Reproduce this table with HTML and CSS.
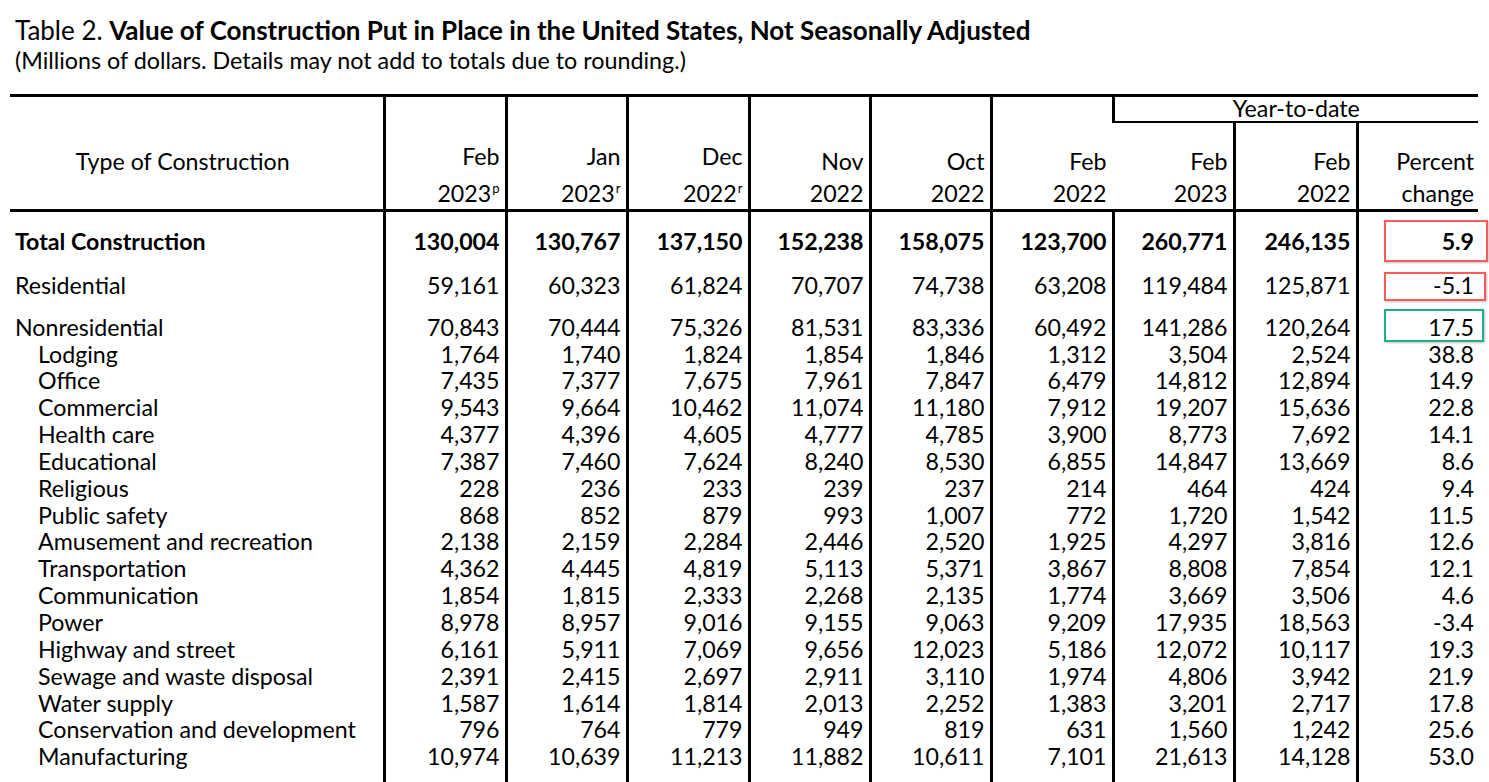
FILE: index.html
```html
<!DOCTYPE html>
<html>
<head>
<meta charset="utf-8">
<link rel="stylesheet" href="styles.css">
</head>
<body>
<div class="page">
  <h1 class="title">Table 2. <b>Value of Construction Put in Place in the United States, Not Seasonally Adjusted</b></h1>
  <p class="subtitle">(Millions of dollars. Details may not add to totals due to rounding.)</p>
  <table class="data">
    <colgroup>
      <col class="c-label">
      <col class="c1"><col class="c2"><col class="c3"><col class="c4"><col class="c5"><col class="c6"><col class="c7"><col class="c8"><col class="c9">
    </colgroup>
    <thead>
      <tr class="h1">
        <th rowspan="2" class="h-label">Type of Construction</th>
        <th rowspan="2" class="h-num"><div class="m up">Feb</div><div class="y">2023<sup>p</sup></div></th>
        <th rowspan="2" class="h-num"><div class="m up">Jan</div><div class="y">2023<sup>r</sup></div></th>
        <th rowspan="2" class="h-num"><div class="m up">Dec</div><div class="y">2022<sup>r</sup></div></th>
        <th rowspan="2" class="h-num"><div class="m">Nov</div><div class="y">2022</div></th>
        <th rowspan="2" class="h-num"><div class="m">Oct</div><div class="y">2022</div></th>
        <th rowspan="2" class="h-num"><div class="m">Feb</div><div class="y">2022</div></th>
        <th colspan="3" class="h-ytd">Year-to-date</th>
      </tr>
      <tr class="h2">
        <th class="h-num"><div class="m">Feb</div><div class="y">2023</div></th>
        <th class="h-num"><div class="m">Feb</div><div class="y">2022</div></th>
        <th class="h-num h-pct"><div class="m">Percent</div><div class="y">change</div></th>
      </tr>
    </thead>
    <tbody>
      <tr class="r-total">
        <td class="lbl">Total Construction</td>
        <td>130,004</td><td>130,767</td><td>137,150</td><td>152,238</td><td>158,075</td><td>123,700</td><td>260,771</td><td>246,135</td>
        <td class="pct"><span class="mark mark-total"></span>5.9</td>
      </tr>
      <tr class="r-res">
        <td class="lbl">Residential</td>
        <td>59,161</td><td>60,323</td><td>61,824</td><td>70,707</td><td>74,738</td><td>63,208</td><td>119,484</td><td>125,871</td>
        <td class="pct"><span class="mark mark-res"></span>-5.1</td>
      </tr>
      <tr class="r-non">
        <td class="lbl">Nonresidential</td>
        <td>70,843</td><td>70,444</td><td>75,326</td><td>81,531</td><td>83,336</td><td>60,492</td><td>141,286</td><td>120,264</td>
        <td class="pct"><span class="mark mark-non"></span>17.5</td>
      </tr>
      <tr><td class="lbl sub">Lodging</td><td>1,764</td><td>1,740</td><td>1,824</td><td>1,854</td><td>1,846</td><td>1,312</td><td>3,504</td><td>2,524</td><td class="pct">38.8</td></tr>
      <tr><td class="lbl sub">Office</td><td>7,435</td><td>7,377</td><td>7,675</td><td>7,961</td><td>7,847</td><td>6,479</td><td>14,812</td><td>12,894</td><td class="pct">14.9</td></tr>
      <tr><td class="lbl sub">Commercial</td><td>9,543</td><td>9,664</td><td>10,462</td><td>11,074</td><td>11,180</td><td>7,912</td><td>19,207</td><td>15,636</td><td class="pct">22.8</td></tr>
      <tr><td class="lbl sub">Health care</td><td>4,377</td><td>4,396</td><td>4,605</td><td>4,777</td><td>4,785</td><td>3,900</td><td>8,773</td><td>7,692</td><td class="pct">14.1</td></tr>
      <tr><td class="lbl sub">Educational</td><td>7,387</td><td>7,460</td><td>7,624</td><td>8,240</td><td>8,530</td><td>6,855</td><td>14,847</td><td>13,669</td><td class="pct">8.6</td></tr>
      <tr><td class="lbl sub">Religious</td><td>228</td><td>236</td><td>233</td><td>239</td><td>237</td><td>214</td><td>464</td><td>424</td><td class="pct">9.4</td></tr>
      <tr><td class="lbl sub">Public safety</td><td>868</td><td>852</td><td>879</td><td>993</td><td>1,007</td><td>772</td><td>1,720</td><td>1,542</td><td class="pct">11.5</td></tr>
      <tr><td class="lbl sub">Amusement and recreation</td><td>2,138</td><td>2,159</td><td>2,284</td><td>2,446</td><td>2,520</td><td>1,925</td><td>4,297</td><td>3,816</td><td class="pct">12.6</td></tr>
      <tr><td class="lbl sub">Transportation</td><td>4,362</td><td>4,445</td><td>4,819</td><td>5,113</td><td>5,371</td><td>3,867</td><td>8,808</td><td>7,854</td><td class="pct">12.1</td></tr>
      <tr><td class="lbl sub">Communication</td><td>1,854</td><td>1,815</td><td>2,333</td><td>2,268</td><td>2,135</td><td>1,774</td><td>3,669</td><td>3,506</td><td class="pct">4.6</td></tr>
      <tr><td class="lbl sub">Power</td><td>8,978</td><td>8,957</td><td>9,016</td><td>9,155</td><td>9,063</td><td>9,209</td><td>17,935</td><td>18,563</td><td class="pct">-3.4</td></tr>
      <tr><td class="lbl sub">Highway and street</td><td>6,161</td><td>5,911</td><td>7,069</td><td>9,656</td><td>12,023</td><td>5,186</td><td>12,072</td><td>10,117</td><td class="pct">19.3</td></tr>
      <tr><td class="lbl sub">Sewage and waste disposal</td><td>2,391</td><td>2,415</td><td>2,697</td><td>2,911</td><td>3,110</td><td>1,974</td><td>4,806</td><td>3,942</td><td class="pct">21.9</td></tr>
      <tr><td class="lbl sub">Water supply</td><td>1,587</td><td>1,614</td><td>1,814</td><td>2,013</td><td>2,252</td><td>1,383</td><td>3,201</td><td>2,717</td><td class="pct">17.8</td></tr>
      <tr><td class="lbl sub">Conservation and development</td><td>796</td><td>764</td><td>779</td><td>949</td><td>819</td><td>631</td><td>1,560</td><td>1,242</td><td class="pct">25.6</td></tr>
      <tr><td class="lbl sub">Manufacturing</td><td>10,974</td><td>10,639</td><td>11,213</td><td>11,882</td><td>10,611</td><td>7,101</td><td>21,613</td><td>14,128</td><td class="pct">53.0</td></tr>
      <tr class="r-tail"><td class="lbl"></td><td></td><td></td><td></td><td></td><td></td><td></td><td></td><td></td><td class="pct"></td></tr>
    </tbody>
  </table>
</div>
</body>
</html>
```

FILE: styles.css
```css
html, body {
  margin: 0;
  padding: 0;
  background: #ffffff;
  color: #000000;
  overflow: hidden;
}
.page {
  font-family: Lato, "Open Sans", "Liberation Sans", sans-serif;
  padding: 15px 0 0 10px;
  height: 782px;
  box-sizing: border-box;
  overflow: hidden;
}
.title {
  margin: 0 0 0 5px;
  font-size: 26px;
  font-weight: 400;
  line-height: 31px;
}
.title b { font-weight: 700; }
.subtitle {
  margin: 0 0 0 5px;
  font-size: 23.3px;
  line-height: 28px;
}
.data {
  margin-top: 20px;
  width: 1468px;
  table-layout: fixed;
  border-collapse: collapse;
  font-size: 23.2px;
}
.c-label { width: 374px; }
.c1 { width: 122px; } .c2 { width: 121px; } .c3 { width: 122px; }
.c4 { width: 121px; } .c5 { width: 121px; } .c6 { width: 122px; }
.c7 { width: 121px; } .c8 { width: 123px; } .c9 { width: 121px; }

.data th, .data td {
  padding: 0 5px 0 0;
  font-weight: 400;
  border-left: 3px solid #000;
  text-align: right;
  line-height: 26.85px;
  white-space: nowrap;
}
.data th:first-child, .data td:first-child { border-left: none; }
.data thead tr.h1 th { border-top: 3px solid #000; }
.data thead th { border-bottom: 3px solid #000; vertical-align: bottom; }
.data thead tr.h1 .h-ytd {
  text-align: center;
  border-bottom: 2px solid #000;
  height: 22px;
  line-height: 20px;
  padding: 0 0 2px 0;
  vertical-align: middle;
}
.h-label {
  text-align: center !important;
  vertical-align: middle !important;
  padding: 17px 27px 0 0 !important;
}
.h-num { padding-bottom: 1px !important; }
.h-num .m { line-height: 33px; position: relative; top: -1px; }
.h-num .m.up { top: -6px; }
.h-num .y { line-height: 29px; }
.h-pct { padding-right: 4px !important; }
.h2 th { height: 85px; }
sup {
  font-size: 13px;
  line-height: 0;
  vertical-align: 9px;
  margin-left: 1px;
}

.lbl {
  text-align: left !important;
  padding-left: 5px !important;
}
.lbl.sub { padding-left: 28px !important; }
.pct { padding-right: 4px !important; position: relative; }

.r-total td { font-weight: 700; padding-top: 16px; }
.r-res td { padding-top: 17px; }
.r-non td { padding-top: 15px; }
.r-tail td { height: 30px; }

.mark {
  position: absolute;
  left: 25px;
  border: 2px solid #ff5a5a;
  box-shadow: 1px 1px 2px rgba(0,0,0,0.25);
  box-sizing: border-box;
}
.mark-total { top: 8px; height: 42px; right: -10px; }
.mark-res { top: 17px; height: 29px; right: -8px; }
.mark-non { top: 10px; height: 33px; right: -6px; border-color: #1fae8b; }
```
